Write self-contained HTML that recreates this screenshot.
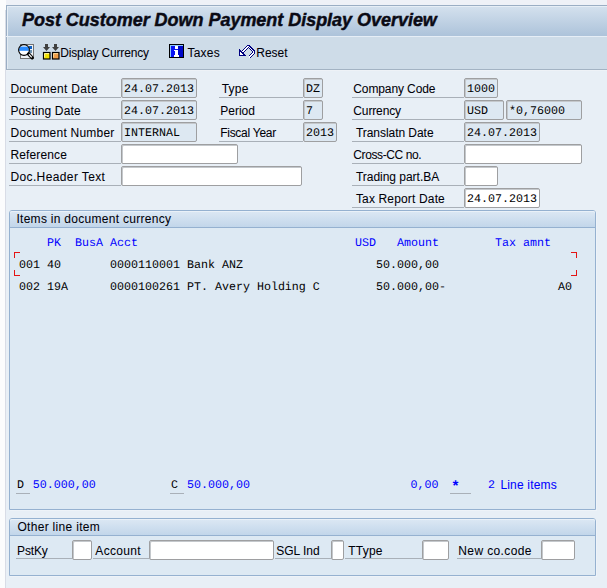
<!DOCTYPE html>
<html><head><meta charset="utf-8"><style>
html,body{margin:0;padding:0;}
body{width:607px;height:588px;overflow:hidden;position:relative;background:#fbfcfd;font-family:'Liberation Sans', sans-serif;}
body>div,body>svg{position:absolute;}
.t{white-space:pre;line-height:12px;}
</style></head><body>
<div style="left:0px;top:0px;width:6px;height:588px;background:#fbfcfd"></div>
<div style="left:6px;top:0px;width:601px;height:5px;background:#eef1f7"></div>
<div style="left:5px;top:10px;width:1px;height:578px;background:#d8dce6"></div>
<div style="left:6px;top:5px;width:601px;height:31px;background:linear-gradient(#d4e1ee,#adc3da);border-top:1px solid #9aaec4;border-left:1px solid #9aaec4;box-sizing:border-box;box-shadow:inset 1px 1px 0 #e6eef6"></div>
<div style="left:6px;top:36px;width:601px;height:1px;background:#e6eef6"></div>
<div style="left:6px;top:37px;width:601px;height:33px;background:#cedce8;border-left:1px solid #9aaec4;border-bottom:1px solid #a3b3c3;box-sizing:border-box;box-shadow:inset 1px 0 0 #e2eaf2"></div>
<div style="left:6px;top:70px;width:601px;height:1px;background:#eef2f7"></div>
<div style="left:6px;top:71px;width:601px;height:517px;background:#e8eff6"></div>
<div class="t" style="left:22px;top:14px;font-family:'Liberation Sans', sans-serif;font-size:18px;color:#0a0a14;font-weight:bold;font-style:italic;letter-spacing:-0.03px;-webkit-text-stroke:0.45px #0a0a14">Post Customer Down Payment Display Overview</div>
<svg style="left:18px;top:44px" width="17" height="16" viewBox="0 0 17 16">
<defs><clipPath id="lens"><circle cx="6" cy="6" r="5"/></clipPath></defs>
<rect x="2.5" y="0.5" width="13" height="14" fill="#eef2f6" stroke="#727272" shape-rendering="crispEdges"/>
<rect x="11" y="2" width="3" height="3" fill="#1060c0" shape-rendering="crispEdges"/>
<rect x="11" y="6" width="3" height="3" fill="#6a8fae" shape-rendering="crispEdges"/>
<circle cx="6" cy="6" r="5.3" fill="#ffffff"/>
<rect x="0" y="2.6" width="12" height="4.2" fill="#2a8cff" clip-path="url(#lens)"/>
<circle cx="6" cy="6" r="5.4" fill="none" stroke="#000" stroke-width="1.1"/>
<path d="M10.6 10 L14.2 13.8" stroke="#000" stroke-width="3.3" stroke-linecap="round"/>
<path d="M10.9 10.3 L13.8 13.4" stroke="#f4f4f4" stroke-width="1.3"/>
</svg>
<svg style="left:42px;top:44px" width="18" height="16" viewBox="0 0 18 16">
<rect x="3" y="0" width="3" height="3.2" fill="#404040"/>
<path d="M1 3 H8 L4.5 7 Z" fill="#404040"/>
<rect x="12" y="0" width="3" height="3.2" fill="#404040"/>
<path d="M10 3 H17 L13.5 7 Z" fill="#404040"/>
<rect x="1.5" y="8.5" width="6.5" height="6.5" fill="#f0e000" stroke="#000" stroke-width="1.2"/>
<path d="M2.6 13.5 V9.6 H7" fill="none" stroke="#fff8b0" stroke-width="0.9"/>
<rect x="10.5" y="8.5" width="6.5" height="6.5" fill="#ee9c48" stroke="#000" stroke-width="1.2"/>
<path d="M11.6 13.5 V9.6 H16" fill="none" stroke="#ffe0a0" stroke-width="0.9"/>
</svg>
<div class="t" style="left:60.3px;top:47px;font-family:'Liberation Sans', sans-serif;font-size:12px;color:#000008;letter-spacing:-0.180px;-webkit-text-stroke:0.05px #000008;">Display Currency</div>
<svg style="left:169px;top:44px" width="15" height="14" viewBox="0 0 15 14" shape-rendering="crispEdges">
<rect x="0" y="0" width="15" height="14" fill="#000"/>
<rect x="1" y="1" width="13" height="12" fill="#0a14f4"/>
<rect x="9" y="2" width="5" height="11" fill="#0008c8"/>
<rect x="1" y="1" width="13" height="1" fill="#8cc8ff"/>
<rect x="1" y="1" width="1" height="12" fill="#8cc8ff"/>
<rect x="6" y="2" width="3" height="3" fill="#fff"/>
<rect x="6" y="6" width="3" height="5" fill="#fff"/>
<rect x="5" y="11" width="5" height="2" fill="#fff"/>
<rect x="5" y="6" width="1" height="1" fill="#fff"/>
</svg>
<div class="t" style="left:187.6px;top:47px;font-family:'Liberation Sans', sans-serif;font-size:12px;color:#000008;letter-spacing:0.175px;-webkit-text-stroke:0.05px #000008;">Taxes</div>
<svg style="left:236px;top:42px" width="22" height="20" viewBox="0 0 22 20" shape-rendering="crispEdges">
<path d="M13.4 15.1 L17.4 11.1 L17.4 9.2 L12.9 4.7 L11.7 4.7 L6.2 10.2" fill="none" stroke="#000080" stroke-width="3.1" stroke-linejoin="miter"/>
<path d="M13.2 15.3 L17.4 11.1 L17.4 9.2 L12.9 4.7 L11.7 4.7 L6.0 10.5" fill="none" stroke="#fff" stroke-width="1.1"/>
<path d="M3.3 6.9 L3.3 13.9 L10.1 13.9 Z" fill="#000080"/>
<path d="M4.4 9.9 L4.4 12.8 L7.3 12.8 Z" fill="#fff"/>
</svg>
<div class="t" style="left:256.2px;top:47px;font-family:'Liberation Sans', sans-serif;font-size:12px;color:#000008;letter-spacing:0.025px;-webkit-text-stroke:0.05px #000008;">Reset</div>
<div style="left:9px;top:97px;width:112px;height:1px;background:#a9b0b8"></div>
<div class="t" style="left:10.4px;top:83px;font-family:'Liberation Sans', sans-serif;font-size:12px;color:#000008;letter-spacing:0.317px;-webkit-text-stroke:0.05px #000008;">Document Date</div>
<div style="left:121px;top:78px;width:76px;height:20px;background:#dde8f2;border:1px solid #9e9fa1;box-sizing:border-box;border-radius:2px;box-shadow:inset 1px 1px 0 #c4c8cc"></div>
<div class="t" style="left:124px;top:83px;font-family:'Liberation Mono', monospace;font-size:11.667px;color:#000000;letter-spacing:0px;text-rendering:geometricPrecision">24.07.2013</div>
<div style="left:9px;top:119px;width:112px;height:1px;background:#a9b0b8"></div>
<div class="t" style="left:10.4px;top:105px;font-family:'Liberation Sans', sans-serif;font-size:12px;color:#000008;letter-spacing:0.136px;-webkit-text-stroke:0.05px #000008;">Posting Date</div>
<div style="left:121px;top:100px;width:76px;height:20px;background:#dde8f2;border:1px solid #9e9fa1;box-sizing:border-box;border-radius:2px;box-shadow:inset 1px 1px 0 #c4c8cc"></div>
<div class="t" style="left:124px;top:105px;font-family:'Liberation Mono', monospace;font-size:11.667px;color:#000000;letter-spacing:0px;text-rendering:geometricPrecision">24.07.2013</div>
<div style="left:9px;top:141px;width:112px;height:1px;background:#a9b0b8"></div>
<div class="t" style="left:10.5px;top:127px;font-family:'Liberation Sans', sans-serif;font-size:12px;color:#000008;letter-spacing:0.221px;-webkit-text-stroke:0.05px #000008;">Document Number</div>
<div style="left:121px;top:122px;width:76px;height:20px;background:#dde8f2;border:1px solid #9e9fa1;box-sizing:border-box;border-radius:2px;box-shadow:inset 1px 1px 0 #c4c8cc"></div>
<div class="t" style="left:124px;top:127px;font-family:'Liberation Mono', monospace;font-size:11.667px;color:#000000;letter-spacing:0px;text-rendering:geometricPrecision">INTERNAL</div>
<div style="left:9px;top:163px;width:112px;height:1px;background:#a9b0b8"></div>
<div class="t" style="left:10.4px;top:149px;font-family:'Liberation Sans', sans-serif;font-size:12px;color:#000008;letter-spacing:0.138px;-webkit-text-stroke:0.05px #000008;">Reference</div>
<div style="left:121px;top:144px;width:117px;height:20px;background:#ffffff;border:1px solid #9e9fa1;box-sizing:border-box;border-radius:2px;box-shadow:inset 1px 1px 0 #c4c8cc"></div>
<div style="left:9px;top:185px;width:112px;height:1px;background:#a9b0b8"></div>
<div class="t" style="left:10.4px;top:171px;font-family:'Liberation Sans', sans-serif;font-size:12px;color:#000008;letter-spacing:0.386px;-webkit-text-stroke:0.05px #000008;">Doc.Header Text</div>
<div style="left:121px;top:166px;width:181px;height:20px;background:#ffffff;border:1px solid #9e9fa1;box-sizing:border-box;border-radius:2px;box-shadow:inset 1px 1px 0 #c4c8cc"></div>
<div style="left:219px;top:97px;width:84px;height:1px;background:#a9b0b8"></div>
<div class="t" style="left:221.7px;top:83px;font-family:'Liberation Sans', sans-serif;font-size:12px;color:#000008;letter-spacing:0.233px;-webkit-text-stroke:0.05px #000008;">Type</div>
<div style="left:303px;top:78px;width:20px;height:20px;background:#dde8f2;border:1px solid #9e9fa1;box-sizing:border-box;border-radius:2px;box-shadow:inset 1px 1px 0 #c4c8cc"></div>
<div class="t" style="left:306px;top:83px;font-family:'Liberation Mono', monospace;font-size:11.667px;color:#000000;letter-spacing:0px;text-rendering:geometricPrecision">DZ</div>
<div style="left:219px;top:119px;width:84px;height:1px;background:#a9b0b8"></div>
<div class="t" style="left:220.2px;top:105px;font-family:'Liberation Sans', sans-serif;font-size:12px;color:#000008;letter-spacing:0.020px;-webkit-text-stroke:0.05px #000008;">Period</div>
<div style="left:303px;top:100px;width:20px;height:20px;background:#dde8f2;border:1px solid #9e9fa1;box-sizing:border-box;border-radius:2px;box-shadow:inset 1px 1px 0 #c4c8cc"></div>
<div class="t" style="left:306px;top:105px;font-family:'Liberation Mono', monospace;font-size:11.667px;color:#000000;letter-spacing:0px;text-rendering:geometricPrecision">7</div>
<div style="left:219px;top:141px;width:84px;height:1px;background:#a9b0b8"></div>
<div class="t" style="left:220.2px;top:127px;font-family:'Liberation Sans', sans-serif;font-size:12px;color:#000008;letter-spacing:-0.270px;-webkit-text-stroke:0.05px #000008;">Fiscal Year</div>
<div style="left:303px;top:122px;width:34px;height:20px;background:#dde8f2;border:1px solid #9e9fa1;box-sizing:border-box;border-radius:2px;box-shadow:inset 1px 1px 0 #c4c8cc"></div>
<div class="t" style="left:306px;top:127px;font-family:'Liberation Mono', monospace;font-size:11.667px;color:#000000;letter-spacing:0px;text-rendering:geometricPrecision">2013</div>
<div style="left:352px;top:97px;width:112px;height:1px;background:#a9b0b8"></div>
<div class="t" style="left:353.3px;top:83px;font-family:'Liberation Sans', sans-serif;font-size:12px;color:#000008;letter-spacing:-0.109px;-webkit-text-stroke:0.05px #000008;">Company Code</div>
<div style="left:464px;top:78px;width:34px;height:20px;background:#dde8f2;border:1px solid #9e9fa1;box-sizing:border-box;border-radius:2px;box-shadow:inset 1px 1px 0 #c4c8cc"></div>
<div class="t" style="left:467px;top:83px;font-family:'Liberation Mono', monospace;font-size:11.667px;color:#000000;letter-spacing:0px;text-rendering:geometricPrecision">1000</div>
<div style="left:352px;top:119px;width:112px;height:1px;background:#a9b0b8"></div>
<div class="t" style="left:353.3px;top:105px;font-family:'Liberation Sans', sans-serif;font-size:12px;color:#000008;letter-spacing:-0.129px;-webkit-text-stroke:0.05px #000008;">Currency</div>
<div style="left:464px;top:100px;width:40px;height:20px;background:#dde8f2;border:1px solid #9e9fa1;box-sizing:border-box;border-radius:2px;box-shadow:inset 1px 1px 0 #c4c8cc"></div>
<div class="t" style="left:467px;top:105px;font-family:'Liberation Mono', monospace;font-size:11.667px;color:#000000;letter-spacing:0px;text-rendering:geometricPrecision">USD</div>
<div style="left:506px;top:100px;width:76px;height:20px;background:#dde8f2;border:1px solid #9e9fa1;box-sizing:border-box;border-radius:2px;box-shadow:inset 1px 1px 0 #c4c8cc"></div>
<div class="t" style="left:509px;top:105px;font-family:'Liberation Mono', monospace;font-size:11.667px;color:#000000;letter-spacing:0px;text-rendering:geometricPrecision">*0,76000</div>
<div style="left:352px;top:141px;width:112px;height:1px;background:#a9b0b8"></div>
<div class="t" style="left:355.9px;top:127px;font-family:'Liberation Sans', sans-serif;font-size:12px;color:#000008;letter-spacing:-0.046px;-webkit-text-stroke:0.05px #000008;">Translatn Date</div>
<div style="left:464px;top:122px;width:76px;height:20px;background:#dde8f2;border:1px solid #9e9fa1;box-sizing:border-box;border-radius:2px;box-shadow:inset 1px 1px 0 #c4c8cc"></div>
<div class="t" style="left:467px;top:127px;font-family:'Liberation Mono', monospace;font-size:11.667px;color:#000000;letter-spacing:0px;text-rendering:geometricPrecision">24.07.2013</div>
<div style="left:352px;top:163px;width:112px;height:1px;background:#a9b0b8"></div>
<div class="t" style="left:353.3px;top:149px;font-family:'Liberation Sans', sans-serif;font-size:12px;color:#000008;letter-spacing:-0.391px;-webkit-text-stroke:0.05px #000008;">Cross-CC no.</div>
<div style="left:464px;top:144px;width:118px;height:20px;background:#ffffff;border:1px solid #9e9fa1;box-sizing:border-box;border-radius:2px;box-shadow:inset 1px 1px 0 #c4c8cc"></div>
<div style="left:352px;top:185px;width:112px;height:1px;background:#a9b0b8"></div>
<div class="t" style="left:355.9px;top:171px;font-family:'Liberation Sans', sans-serif;font-size:12px;color:#000008;letter-spacing:-0.021px;-webkit-text-stroke:0.05px #000008;">Trading part.BA</div>
<div style="left:464px;top:166px;width:34px;height:20px;background:#ffffff;border:1px solid #9e9fa1;box-sizing:border-box;border-radius:2px;box-shadow:inset 1px 1px 0 #c4c8cc"></div>
<div style="left:352px;top:207px;width:112px;height:1px;background:#a9b0b8"></div>
<div class="t" style="left:355.9px;top:193px;font-family:'Liberation Sans', sans-serif;font-size:12px;color:#000008;letter-spacing:0.157px;-webkit-text-stroke:0.05px #000008;">Tax Report Date</div>
<div style="left:464px;top:188px;width:76px;height:20px;background:#ffffff;border:1px solid #9e9fa1;box-sizing:border-box;border-radius:2px;box-shadow:inset 1px 1px 0 #c4c8cc"></div>
<div class="t" style="left:467px;top:193px;font-family:'Liberation Mono', monospace;font-size:11.667px;color:#000000;letter-spacing:0px;text-rendering:geometricPrecision">24.07.2013</div>
<div style="left:9px;top:210px;width:587px;height:300px;border:1px solid #95b1d0;border-radius:3px 3px 0 0;box-sizing:border-box;background:#dde9f3;box-shadow:1px 1px 0 #eef3f8"></div>
<div style="left:10px;top:211px;width:585px;height:16px;border-radius:2px 2px 0 0;background:linear-gradient(#dce8f4,#c2d6ea);box-shadow:inset 0 1px 0 #eaf1f8"></div>
<div style="left:10px;top:227px;width:585px;height:1px;background:#95b1d0"></div>
<div class="t" style="left:16.4px;top:213px;font-family:'Liberation Sans', sans-serif;font-size:12px;color:#000008;letter-spacing:0.288px;-webkit-text-stroke:0.05px #000008;">Items in document currency</div>
<div style="left:9px;top:518px;width:587px;height:58px;border:1px solid #95b1d0;border-radius:3px 3px 0 0;box-sizing:border-box;background:#dde9f3;box-shadow:1px 1px 0 #eef3f8"></div>
<div style="left:10px;top:519px;width:585px;height:16px;border-radius:2px 2px 0 0;background:linear-gradient(#dce8f4,#c2d6ea);box-shadow:inset 0 1px 0 #eaf1f8"></div>
<div style="left:10px;top:535px;width:585px;height:1px;background:#95b1d0"></div>
<div class="t" style="left:17.4px;top:521px;font-family:'Liberation Sans', sans-serif;font-size:12px;color:#000008;letter-spacing:0.314px;-webkit-text-stroke:0.05px #000008;">Other line item</div>
<div class="t" style="left:47.0px;top:237px;font-family:'Liberation Mono', monospace;font-size:11.667px;color:#0000ff;letter-spacing:0px;text-rendering:geometricPrecision">PK</div>
<div class="t" style="left:75.0px;top:237px;font-family:'Liberation Mono', monospace;font-size:11.667px;color:#0000ff;letter-spacing:0px;text-rendering:geometricPrecision">BusA</div>
<div class="t" style="left:110.0px;top:237px;font-family:'Liberation Mono', monospace;font-size:11.667px;color:#0000ff;letter-spacing:0px;text-rendering:geometricPrecision">Acct</div>
<div class="t" style="left:355.0px;top:237px;font-family:'Liberation Mono', monospace;font-size:11.667px;color:#0000ff;letter-spacing:0px;text-rendering:geometricPrecision">USD</div>
<div class="t" style="left:397.0px;top:237px;font-family:'Liberation Mono', monospace;font-size:11.667px;color:#0000ff;letter-spacing:0px;text-rendering:geometricPrecision">Amount</div>
<div class="t" style="left:495.0px;top:237px;font-family:'Liberation Mono', monospace;font-size:11.667px;color:#0000ff;letter-spacing:0px;text-rendering:geometricPrecision">Tax&nbsp;amnt</div>
<div class="t" style="left:19.0px;top:259px;font-family:'Liberation Mono', monospace;font-size:11.667px;color:#000000;letter-spacing:0px;text-rendering:geometricPrecision">001</div>
<div class="t" style="left:47.0px;top:259px;font-family:'Liberation Mono', monospace;font-size:11.667px;color:#000000;letter-spacing:0px;text-rendering:geometricPrecision">40</div>
<div class="t" style="left:110.0px;top:259px;font-family:'Liberation Mono', monospace;font-size:11.667px;color:#000000;letter-spacing:0px;text-rendering:geometricPrecision">0000110001&nbsp;Bank&nbsp;ANZ</div>
<div class="t" style="left:376.0px;top:259px;font-family:'Liberation Mono', monospace;font-size:11.667px;color:#000000;letter-spacing:0px;text-rendering:geometricPrecision">50.000,00</div>
<div class="t" style="left:19.0px;top:281px;font-family:'Liberation Mono', monospace;font-size:11.667px;color:#000000;letter-spacing:0px;text-rendering:geometricPrecision">002</div>
<div class="t" style="left:47.0px;top:281px;font-family:'Liberation Mono', monospace;font-size:11.667px;color:#000000;letter-spacing:0px;text-rendering:geometricPrecision">19A</div>
<div class="t" style="left:110.0px;top:281px;font-family:'Liberation Mono', monospace;font-size:11.667px;color:#000000;letter-spacing:0px;text-rendering:geometricPrecision">0000100261&nbsp;PT.&nbsp;Avery&nbsp;Holding&nbsp;C</div>
<div class="t" style="left:376.0px;top:281px;font-family:'Liberation Mono', monospace;font-size:11.667px;color:#000000;letter-spacing:0px;text-rendering:geometricPrecision">50.000,00-</div>
<div class="t" style="left:558.0px;top:281px;font-family:'Liberation Mono', monospace;font-size:11.667px;color:#000000;letter-spacing:0px;text-rendering:geometricPrecision">A0</div>
<div style="left:14px;top:252px;width:6px;height:6px;border-top:1px solid #e41414;border-left:1px solid #e41414;box-sizing:border-box"></div>
<div style="left:14px;top:270px;width:6px;height:6px;border-bottom:1px solid #e41414;border-left:1px solid #e41414;box-sizing:border-box"></div>
<div style="left:571px;top:252px;width:6px;height:6px;border-top:1px solid #e41414;border-right:1px solid #e41414;box-sizing:border-box"></div>
<div style="left:571px;top:270px;width:6px;height:6px;border-bottom:1px solid #e41414;border-right:1px solid #e41414;box-sizing:border-box"></div>
<div class="t" style="left:17px;top:479px;font-family:'Liberation Mono', monospace;font-size:11.667px;color:#000000;letter-spacing:0px;text-rendering:geometricPrecision">D</div>
<div style="left:16px;top:493px;width:14px;height:1px;background:#a9b0b8"></div>
<div class="t" style="left:32.8px;top:479px;font-family:'Liberation Mono', monospace;font-size:11.667px;color:#0000ff;letter-spacing:0px;text-rendering:geometricPrecision">50.000,00</div>
<div class="t" style="left:171px;top:479px;font-family:'Liberation Mono', monospace;font-size:11.667px;color:#000000;letter-spacing:0px;text-rendering:geometricPrecision">C</div>
<div style="left:170px;top:493px;width:14px;height:1px;background:#a9b0b8"></div>
<div class="t" style="left:187px;top:479px;font-family:'Liberation Mono', monospace;font-size:11.667px;color:#0000ff;letter-spacing:0px;text-rendering:geometricPrecision">50.000,00</div>
<div class="t" style="left:410.5px;top:479px;font-family:'Liberation Mono', monospace;font-size:11.667px;color:#0000ff;letter-spacing:0px;text-rendering:geometricPrecision">0,00</div>
<div class="t" style="left:451px;top:482px;font-family:'Liberation Mono', monospace;font-size:15px;color:#0000ff;font-weight:bold;text-rendering:geometricPrecision">*</div>
<div style="left:450px;top:493px;width:21px;height:1px;background:#a9b0b8"></div>
<div class="t" style="left:488px;top:479px;font-family:'Liberation Mono', monospace;font-size:11.667px;color:#0000ff;letter-spacing:0px;text-rendering:geometricPrecision">2</div>
<div class="t" style="left:500.4px;top:479px;font-family:'Liberation Sans', sans-serif;font-size:12px;color:#0000ff;letter-spacing:0.189px;-webkit-text-stroke:0.05px #0000ff;">Line items</div>
<div style="left:16px;top:558px;width:56px;height:1px;background:#a9b0b8"></div>
<div class="t" style="left:17.1px;top:545px;font-family:'Liberation Sans', sans-serif;font-size:12px;color:#000008;letter-spacing:-0.175px;-webkit-text-stroke:0.05px #000008;">PstKy</div>
<div style="left:72px;top:540px;width:20px;height:20px;background:#ffffff;border:1px solid #9e9fa1;box-sizing:border-box;border-radius:2px;box-shadow:inset 1px 1px 0 #c4c8cc"></div>
<div style="left:93px;top:558px;width:56px;height:1px;background:#a9b0b8"></div>
<div class="t" style="left:95.3px;top:545px;font-family:'Liberation Sans', sans-serif;font-size:12px;color:#000008;letter-spacing:0.333px;-webkit-text-stroke:0.05px #000008;">Account</div>
<div style="left:149px;top:540px;width:125px;height:20px;background:#ffffff;border:1px solid #9e9fa1;box-sizing:border-box;border-radius:2px;box-shadow:inset 1px 1px 0 #c4c8cc"></div>
<div style="left:275px;top:558px;width:56px;height:1px;background:#a9b0b8"></div>
<div class="t" style="left:276.3px;top:545px;font-family:'Liberation Sans', sans-serif;font-size:12px;color:#000008;letter-spacing:-0.050px;-webkit-text-stroke:0.05px #000008;">SGL Ind</div>
<div style="left:331px;top:540px;width:13px;height:20px;background:#ffffff;border:1px solid #9e9fa1;box-sizing:border-box;border-radius:2px;box-shadow:inset 1px 1px 0 #c4c8cc"></div>
<div style="left:345px;top:558px;width:77px;height:1px;background:#a9b0b8"></div>
<div class="t" style="left:348.2px;top:545px;font-family:'Liberation Sans', sans-serif;font-size:12px;color:#000008;letter-spacing:0.250px;-webkit-text-stroke:0.05px #000008;">TType</div>
<div style="left:422px;top:540px;width:27px;height:20px;background:#ffffff;border:1px solid #9e9fa1;box-sizing:border-box;border-radius:2px;box-shadow:inset 1px 1px 0 #c4c8cc"></div>
<div style="left:457px;top:558px;width:84px;height:1px;background:#a9b0b8"></div>
<div class="t" style="left:458.3px;top:545px;font-family:'Liberation Sans', sans-serif;font-size:12px;color:#000008;letter-spacing:0.380px;-webkit-text-stroke:0.05px #000008;">New co.code</div>
<div style="left:541px;top:540px;width:34px;height:20px;background:#ffffff;border:1px solid #9e9fa1;box-sizing:border-box;border-radius:2px;box-shadow:inset 1px 1px 0 #c4c8cc"></div>
</body></html>
